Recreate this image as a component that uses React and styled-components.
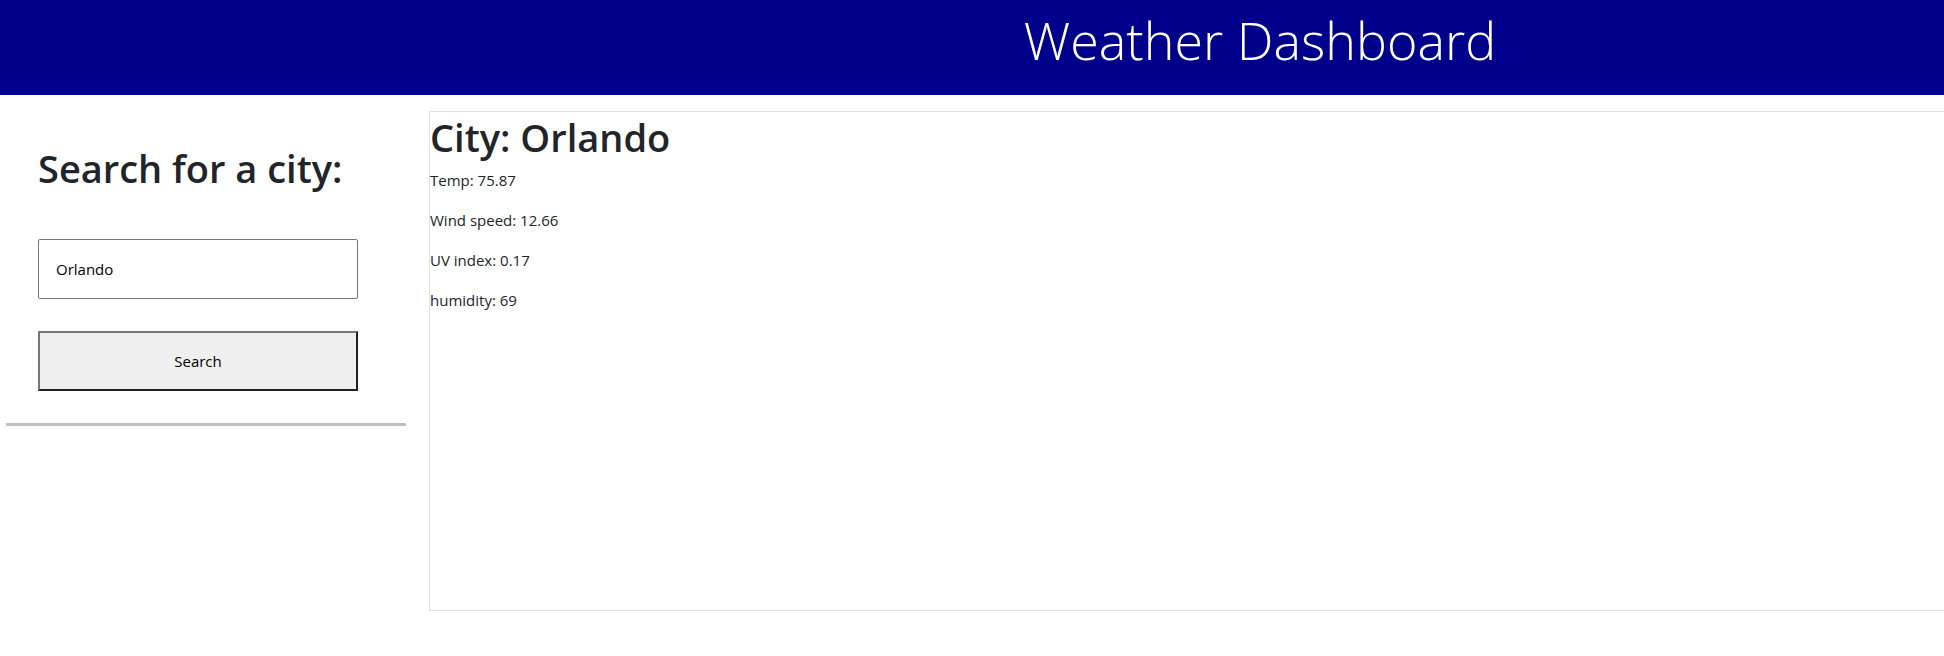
import React, { useState } from 'react';
import styled, { createGlobalStyle } from 'styled-components';

const GlobalStyle = createGlobalStyle`
  *, *::before, *::after { box-sizing: border-box; }
  body {
    margin: 0;
    background: #fff;
    color: #212529;
    font-family: "Segoe UI", "Open Sans", "Noto Sans", sans-serif;
    font-size: 15px;
    line-height: 24px;
    overflow-x: hidden;
  }
`;

const Header = styled.header`
  padding: 8px 0 23px 576px;
  background: #00008b;
  color: #fff;
  text-align: center;
`;

const Title = styled.h1`
  margin: 0;
  font-size: 52px;
  font-weight: 300;
  line-height: 64px;
  white-space: nowrap;
`;

const Main = styled.main`
  display: flex;
  align-items: flex-start;
  gap: 23px;
  padding: 16px 0 32px 6px;
`;

const SearchForm = styled.form`
  flex: 0 0 400px;
  display: flex;
  flex-direction: column;
  gap: 32px;
  padding: 32px 48px 32px 32px;
  border-bottom: 3px solid #c0c0c0;
`;

const Heading = styled.h2`
  margin: 0;
  font-size: 38px;
  font-weight: 600;
  line-height: 50px;
  white-space: nowrap;
`;

const SearchLabel = styled(Heading).attrs({ as: 'label' })`
  margin-bottom: 14px;
`;

const CityInput = styled.input`
  width: 100%;
  height: 60px;
  padding: 0 17px;
  border: 1px solid #767676;
  border-radius: 2px;
  background: #fff;
  color: #000;
  font: inherit;
`;

const SearchButton = styled.button`
  width: 100%;
  height: 60px;
  border: 2px solid;
  border-color: #767676 #212121 #212121 #767676;
  background: #efefef;
  color: #000;
  font: inherit;
`;

const Weather = styled.section`
  flex: 1;
  min-height: 500px;
  border: 1px solid #dee2e6;
  border-right: 0;
`;

const Reading = styled.p`
  margin: 0 0 16px;
`;

const CityHeading = styled(Heading)`
  margin-bottom: 6px;
`;

const readings = [
  ['Temp', '75.87'],
  ['Wind speed', '12.66'],
  ['UV index', '0.17'],
  ['humidity', '69'],
];

export default function App() {
  const [city, setCity] = useState('Orlando');
  return (
    <>
      <GlobalStyle />
      <Header>
        <Title>Weather Dashboard</Title>
      </Header>
      <Main>
        <SearchForm onSubmit={(event) => event.preventDefault()}>
          <SearchLabel htmlFor="city">Search for a city:</SearchLabel>
          <CityInput id="city" type="text" value={city} onChange={(event) => setCity(event.target.value)} />
          <SearchButton type="submit">Search</SearchButton>
        </SearchForm>
        <Weather>
          <CityHeading>City: Orlando</CityHeading>
          {readings.map(([name, value]) => (
            <Reading key={name}>{name}: {value}</Reading>
          ))}
        </Weather>
      </Main>
    </>
  );
}
